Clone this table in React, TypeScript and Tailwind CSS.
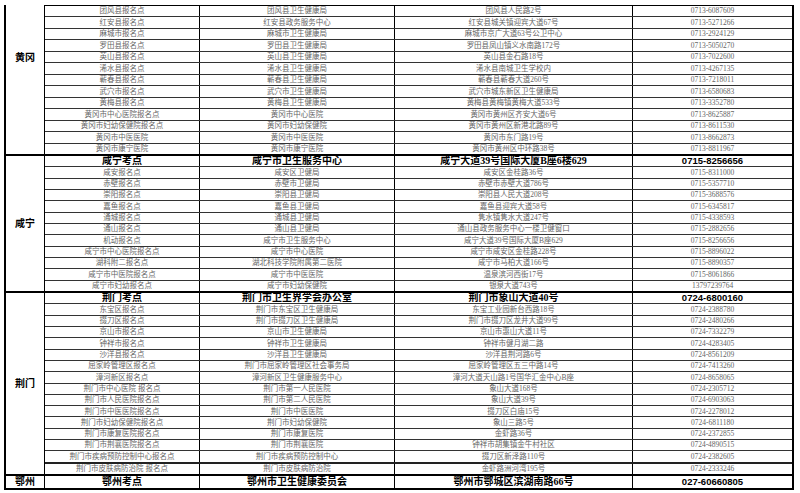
import React from 'react';

type Row = [string, string, string, string];

interface Section {
  region: string;
  hasHeader: boolean;
  height: string;
  rows: Row[];
}

const SECTIONS: Section[] = [
  {
    region: '黄冈',
    hasHeader: false,
    height: 'h-[151px]',
    rows: [
      ['团风县报名点', '团风县卫生健康局', '团风县人民路2号', '0713-6087609'],
      ['红安县报名点', '红安县政务服务中心', '红安县城关镇迎宾大道67号', '0713-5271266'],
      ['麻城市报名点', '麻城市卫生健康局', '麻城市京广大道63号公卫中心', '0713-2924129'],
      ['罗田县报名点', '罗田县卫生健康局', '罗田县凤山镇义水南路172号', '0713-5050270'],
      ['英山县报名点', '英山县卫生健康局', '英山县金石路18号', '0713-7022600'],
      ['浠水县报名点', '浠水县卫生健康局', '浠水县南城卫生学校内', '0713-4267135'],
      ['蕲春县报名点', '蕲春县卫生健康局', '蕲春县蕲春大道260号', '0713-7218011'],
      ['武穴市报名点', '武穴市卫生健康局', '武穴市城东新区卫生健康局', '0713-6580683'],
      ['黄梅县报名点', '黄梅县卫生健康局', '黄梅县黄梅镇黄梅大道533号', '0713-3352780'],
      ['黄冈市中心医院报名点', '黄冈市中心医院', '黄冈市黄州区齐安大道6号', '0713-8625887'],
      ['黄冈市妇幼保健院报名点', '黄冈市妇幼保健院', '黄冈市黄州区新港北路89号', '0713-8611530'],
      ['黄冈市中医医院', '黄冈市中医医院', '黄冈市东门路19号', '0713-8662873'],
      ['黄冈市康宁医院', '黄冈市康宁医院', '黄冈市黄州区中环路38号', '0713-8811967'],
    ],
  },
  {
    region: '咸宁',
    hasHeader: true,
    height: 'h-[137px]',
    rows: [
      ['咸宁考点', '咸宁市卫生服务中心', '咸宁大道39号国际大厦B座6楼629', '0715-8256656'],
      ['咸安报名点', '咸安区卫健局', '咸安区金桂路36号', '0715-8311000'],
      ['赤壁报名点', '赤壁市卫健局', '赤壁市赤壁大道786号', '0715-5357710'],
      ['崇阳报名点', '崇阳县卫健局', '崇阳县人民大道208号', '0715-3688576'],
      ['嘉鱼报名点', '嘉鱼县卫健局', '嘉鱼县迎宾大道58号', '0715-6345817'],
      ['通城报名点', '通城县卫健局', '隽水镇隽水大道247号', '0715-4338593'],
      ['通山报名点', '通山县卫健局', '通山县政务服务中心一楼卫健窗口', '0715-2882656'],
      ['机动报名点', '咸宁市卫生服务中心', '咸宁大道39号国际大厦B座629', '0715-8256656'],
      ['咸宁市中心医院报名点', '咸宁市中心医院', '咸宁市咸安区金桂路228号', '0715-8896022'],
      ['湖科附二报名点', '湖北科技学院附属第二医院', '咸宁市马柏大道166号', '0715-8890357'],
      ['咸宁市中医院报名点', '咸宁市中医医院', '温泉滨河西街17号', '0715-8061866'],
      ['咸宁市妇幼报名点', '咸宁市妇幼保健院', '银泉大道743号', '13797239764'],
    ],
  },
  {
    region: '荆门',
    hasHeader: true,
    height: 'h-[183px]',
    rows: [
      ['荆门考点', '荆门市卫生界学会办公室', '荆门市象山大道40号', '0724-6800160'],
      ['东宝区报名点', '荆门市东宝区卫生健康局', '东宝工业园新台西路18号', '0724-2388780'],
      ['掇刀区报名点', '荆门市掇刀区卫生健康局', '荆门市掇刀区龙井大道99号', '0724-2480266'],
      ['京山市报名点', '京山市卫生健康局', '京山市惠山大道11号', '0724-7332279'],
      ['钟祥市报名点', '钟祥市卫生健康局', '钟祥市健月湖二路', '0724-4283405'],
      ['沙洋县报名点', '沙洋县卫生健康局', '沙洋县荆河路6号', '0724-8561209'],
      ['屈家岭管理区报名点', '荆门市屈家岭管理区社会事务局', '屈家岭管理区五三中路14号', '0724-7413260'],
      ['漳河新区报名点', '漳河新区卫生健康服务中心', '漳河大道天山路1号国华汇金中心B座', '0724-8658065'],
      ['荆门市中心医院 报名点', '荆门市第一人民医院', '象山大道168号', '0724-2305712'],
      ['荆门市人民医院报名点', '荆门市第二人民医院', '象山大道39号', '0724-6903063'],
      ['荆门市中医医院报名点', '荆门市中医医院', '掇刀区白庙15号', '0724-2278012'],
      ['荆门市妇幼保健院报名点', '荆门市妇幼保健院', '象山三路5号', '0724-6811180'],
      ['荆门市康复医院报名点', '荆门市康复医院', '金虾路36号', '0724-2372855'],
      ['荆门市荆襄医院报名点', '荆门市荆襄医院', '钟祥市胡集镇金牛村社区', '0724-4890515'],
      ['荆门市疾病预防控制中心报名点', '荆门市疾病预防控制中心', '掇刀区新泽路110号', '0724-2382605'],
      ['荆门市皮肤病防治院 报名点', '荆门市皮肤病防治院', '金虾路洲河湾195号', '0724-2333246'],
    ],
  },
  {
    region: '鄂州',
    hasHeader: true,
    height: 'h-[14px]',
    rows: [['鄂州考点', '鄂州市卫生健康委员会', '鄂州市鄂城区滨湖南路66号', '027-60660805']],
  },
];

const plainText = 'text-[#666] text-[7.5px]';
const headText = 'font-bold text-black text-[10px]';

const TableRow = ({ row, isHeader, isFirst, isThick }: { row: Row; isHeader: boolean; isFirst: boolean; isThick: boolean }) => {
  const border = isFirst ? '' : isThick ? 'border-t-2 border-[#222]' : 'border-t border-[#333]';
  const text = isHeader ? headText : plainText;

  return (
    <div className={`flex flex-1 min-h-0 ${border}`}>
      <div className={`w-[155px] shrink-0 border-r border-black flex items-center justify-center leading-none whitespace-nowrap ${text}`}>
        {row[0]}
      </div>
      <div className={`w-[195px] shrink-0 border-r border-black flex items-center justify-center leading-none whitespace-nowrap ${text}`}>
        {row[1]}
      </div>
      <div className={`w-[238px] shrink-0 border-r border-black flex items-center justify-center leading-none whitespace-nowrap ${text}`}>
        {row[2]}
      </div>
      <div
        className={`flex-1 flex items-center justify-center leading-none whitespace-nowrap ${
          isHeader ? "font-bold text-black text-[9.5px] font-['Liberation_Sans',sans-serif]" : plainText
        }`}
      >
        {row[3]}
      </div>
    </div>
  );
};

const App = () => {
  return (
    <div className="w-[800px] h-[493px] bg-white overflow-hidden relative pl-[4px] pt-[5px] font-['Liberation_Serif','Noto_Sans_CJK_SC',serif]">
      <div className="flex flex-col w-[790px]">
        {SECTIONS.map((section, sIdx) => (
          <div key={section.region} className={`flex shrink-0 border-b-2 border-black ${section.height}`}>
            <div
              className={`w-[41px] shrink-0 border-l-2 border-r border-black flex justify-center text-[10px] font-bold text-black leading-none ${
                sIdx === 0 ? 'items-start pt-[48px]' : 'items-center'
              }`}
            >
              {section.region}
            </div>
            <div className={`w-[749px] flex flex-col border-r-2 border-black ${sIdx === 0 ? 'border-t border-t-black' : ''}`}>
              {section.rows.map((row, idx) => (
                <TableRow
                  key={row[0] + idx}
                  row={row}
                  isHeader={section.hasHeader && idx === 0}
                  isFirst={idx === 0}
                  isThick={section.region === '荆门' && idx === 15}
                />
              ))}
            </div>
          </div>
        ))}
      </div>
    </div>
  );
};

export default App;
